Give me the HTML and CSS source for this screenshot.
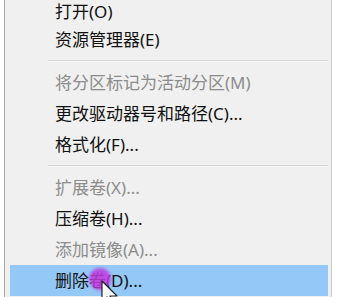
FILE: index.html
```html
<!DOCTYPE html>
<html lang="zh-CN">
<head>
    <meta charset="UTF-8">
    <title>磁盘管理菜单</title>
    <link rel="stylesheet" href="styles.css">
</head>
<body>
    <div class="menu">
        <div class="menu-item first">打开(O)</div>
        <div class="menu-item">资源管理器(E)</div>
        <div class="separator"></div>
        <div class="menu-item disabled">将分区标记为活动分区(M)</div>
        <div class="menu-item">更改驱动器号和路径(C)...</div>
        <div class="menu-item">格式化(F)...</div>
        <div class="separator"></div>
        <div class="menu-item disabled">扩展卷(X)...</div>
        <div class="menu-item">压缩卷(H)...</div>
        <div class="menu-item disabled">添加镜像(A)...</div>
        <div class="menu-item active">删除卷(D)...</div>
    </div>

    <div class="click-dot"></div>
    <svg class="pointer" width="20" height="26" viewBox="0 0 20 26">
        <path d="M1 1 L1 22 L6 17 L10 25 L13 23.5 L9 16 L16 16 Z" fill="#fff" stroke="#222" stroke-width="1.2" stroke-linejoin="round"/>
    </svg>
</body>
</html>
```

FILE: styles.css
```css
body {
    margin: 0;
    background-color: #fff;
    font-family: "Noto Sans", "Noto Sans CJK SC", sans-serif;
    overflow: hidden;
}

.menu {
    margin-left: 4px;
    width: 328px;
    padding: 0 3px 4px 5px;
    background-color: #f0f0f0;
    border-left: 1px solid #a8a8a8;
    border-right: 1px solid #c8c8c8;
    box-sizing: border-box;
}

.menu-item {
    height: 31px;
    line-height: 31px;
    padding-left: 45px;
    font-size: 17px;
    color: #111;
    white-space: nowrap;
}

.menu-item.first {
    height: 24px;
    line-height: 24px;
}

.menu-item.disabled {
    color: #8c8c8c;
}

.menu-item.active {
    background-color: #94c8f6;
}

.separator {
    height: 1px;
    margin: 5px 0 5px 38px;
    background-color: #d4d4d4;
    border-bottom: 1px solid #fafafa;
}

.click-dot {
    position: absolute;
    left: 89px;
    top: 268px;
    width: 22px;
    height: 22px;
    border-radius: 50%;
    background-color: #c23be0;
    opacity: 0.85;
    filter: blur(1.5px);
}

.pointer {
    position: absolute;
    left: 101px;
    top: 280px;
}
```
